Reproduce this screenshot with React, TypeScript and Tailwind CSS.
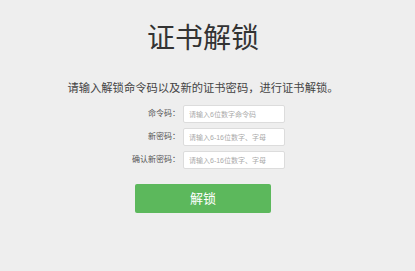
import React from "react";

const font = { fontFamily: '"Liberation Sans", "Noto Sans CJK SC", sans-serif' };

function Row({ label, placeholder }: { label: string; placeholder: string }) {
  return (
    <div className="flex items-center">
      <div className="w-[80px] text-right text-[8px] text-[#555] pr-[3px]">{label}</div>
      <input
        className="w-[102px] h-[18px] bg-white border border-[#dcdcdc] rounded-[2px] px-[5px] text-[7px] text-[#333] placeholder:text-[#aaa] outline-none"
        placeholder={placeholder}
      />
    </div>
  );
}

export default function App() {
  return (
    <div className="w-[415px] h-[271px] bg-[#eeeeee] overflow-hidden" style={font}>
      <div className="w-[406px] flex flex-col items-center">
        <h1 className="mt-[19px] text-[28px] leading-[40px] text-[#333]">证书解锁</h1>
        <p className="mt-[22px] text-[11.3px] leading-[14px] text-[#444]">
          请输入解锁命令码以及新的证书密码，进行证书解锁。
        </p>
        <div className="mt-[10px] flex flex-col gap-[5px] mr-[18px]">
          <Row label="命令码：" placeholder="请输入6位数字命令码" />
          <Row label="新密码：" placeholder="请输入6-16位数字、字母" />
          <Row label="确认新密码：" placeholder="请输入6-16位数字、字母" />
        </div>
        <button className="mt-[15px] w-[136px] h-[29px] bg-[#5cb85c] rounded-[2px] text-white text-[13px]">
          解锁
        </button>
      </div>
    </div>
  );
}
